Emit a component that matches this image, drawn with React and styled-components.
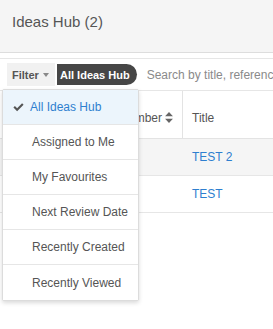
import styled, { createGlobalStyle } from 'styled-components';

const GlobalStyle = createGlobalStyle`
  body {
    margin: 0;
    background: #ffffff;
    font-family: "Liberation Sans", Arial, sans-serif;
  }
`;

const menuItems = [
  'All Ideas Hub',
  'Assigned to Me',
  'My Favourites',
  'Next Review Date',
  'Recently Created',
  'Recently Viewed'
];

const rows = ['TEST 2', 'TEST'];

export default function App() {
  return (
    <Page>
      <GlobalStyle />
      <Header>
        <h1>Ideas Hub (2)</h1>
      </Header>
      <Toolbar>
        <FilterButton>
          Filter
          <Caret />
        </FilterButton>
        <Pill>All Ideas Hub</Pill>
        <Search placeholder="Search by title, reference number" />
      </Toolbar>
      <Table>
        <HeadRow>
          <NumberCell>
            Reference Number
            <SortIcon viewBox="0 0 10 14">
              <path d="M5 0 L10 5.5 H0 Z M5 14 L10 8.5 H0 Z" fill="#666" />
            </SortIcon>
          </NumberCell>
          <TitleCell>Title</TitleCell>
        </HeadRow>
        {rows.map((title, index) => (
          <Row key={title} striped={index % 2 === 0}>
            <NumberCell />
            <TitleCell>
              <a href="#">{title}</a>
            </TitleCell>
          </Row>
        ))}
      </Table>
      <Menu>
        {menuItems.map((item, index) => (
          <MenuItem key={item} active={index === 0}>
            {index === 0 && (
              <Check viewBox="0 0 16 14">
                <path
                  d="M6 13.2 L0.6 7.8 L2.8 5.6 L6 8.8 L13.2 1.6 L15.4 3.8 Z"
                  fill="#555"
                />
              </Check>
            )}
            {item}
          </MenuItem>
        ))}
      </Menu>
    </Page>
  );
}

const Page = styled.div`
  position: relative;
  width: 273px;
  height: 329px;
  overflow: hidden;
`;

const Header = styled.div`
  height: 53px;
  background: #f5f5f5;
  border-bottom: 1px solid #dddddd;
  box-sizing: border-box;
  padding: 13px 12px 0;

  h1 {
    margin: 0;
    font-size: 15px;
    font-weight: 400;
    color: #555555;
  }
`;

const Toolbar = styled.div`
  margin-top: 5px;
  height: 31px;
  border-top: 1px solid #e6e6e6;
  border-bottom: 1px solid #e6e6e6;
  display: flex;
  align-items: center;
  padding-left: 7px;
`;

const FilterButton = styled.div`
  height: 23px;
  width: 48px;
  box-sizing: border-box;
  padding-left: 5px;
  background: #f1f1f1;
  display: flex;
  align-items: center;
  gap: 4px;
  font-size: 11px;
  font-weight: 700;
  color: #555555;
`;

const Caret = styled.span`
  width: 0;
  height: 0;
  border-left: 3.5px solid transparent;
  border-right: 3.5px solid transparent;
  border-top: 4px solid #888888;
`;

const Pill = styled.div`
  margin-left: 2px;
  height: 21px;
  padding: 0 7px 0 3px;
  background: #464646;
  border-radius: 0 11px 11px 0;
  display: flex;
  align-items: center;
  font-size: 11px;
  font-weight: 700;
  color: #ffffff;
  white-space: nowrap;
`;

const Search = styled.input`
  flex: 1;
  min-width: 0;
  border: none;
  outline: none;
  background: transparent;
  margin-left: 2px;
  padding: 0 0 0 8px;
  font-family: "Liberation Sans", Arial, sans-serif;
  font-size: 12px;
  color: #555555;

  &::placeholder {
    color: #8a8a8a;
  }
`;

const Table = styled.div`
  display: flex;
  flex-direction: column;
`;

const HeadRow = styled.div`
  display: flex;
  height: 47px;
  border-bottom: 1px solid #e3e3e3;
  font-size: 12px;
  color: #555555;

  & > div {
    padding-top: 6px;
  }
`;

const Row = styled.div`
  display: flex;
  height: 36px;
  border-bottom: 1px solid #e6e6e6;
  background: ${(p) => (p.striped ? '#f5f5f5' : '#ffffff')};
  font-size: 12px;

  a {
    color: #2e7fcf;
    text-decoration: none;
  }
`;

const NumberCell = styled.div`
  width: 183px;
  flex-shrink: 0;
  box-sizing: border-box;
  border-right: 1px solid #e3e3e3;
  display: flex;
  align-items: center;
  justify-content: flex-end;
  gap: 3px;
  padding-right: 9px;
  white-space: nowrap;

  ${Row} & {
    border-right: none;
  }
`;

const SortIcon = styled.svg`
  width: 8px;
  height: 11px;
`;

const TitleCell = styled.div`
  flex: 1;
  display: flex;
  align-items: center;
  padding-left: 9px;
`;

const Menu = styled.div`
  position: absolute;
  left: 2px;
  top: 89px;
  width: 137px;
  box-sizing: border-box;
  background: #ffffff;
  border: 1px solid #dcdcdc;
  border-radius: 2px;
  box-shadow: 0 2px 4px rgba(0, 0, 0, 0.15);
`;

const MenuItem = styled.div`
  height: 35px;
  box-sizing: border-box;
  display: flex;
  align-items: center;
  padding-left: ${(p) => (p.active ? '10px' : '29px')};
  gap: 6px;
  border-bottom: 1px solid #e6e6e6;
  background: ${(p) => (p.active ? '#ecf5fc' : '#ffffff')};
  color: ${(p) => (p.active ? '#2e7fcf' : '#555555')};
  font-size: 12px;
  white-space: nowrap;

  &:last-child {
    border-bottom: none;
  }
`;

const Check = styled.svg`
  width: 11px;
  height: 10px;
`;
